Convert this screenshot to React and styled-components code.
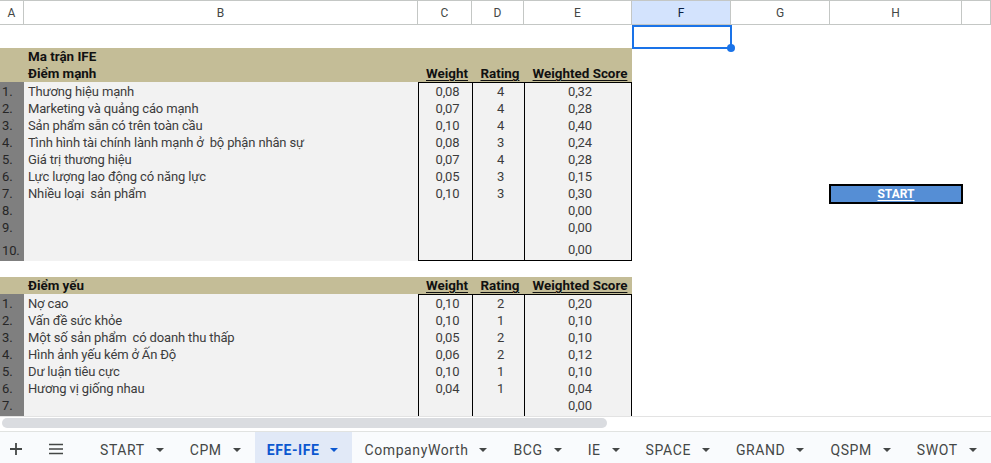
import React from "react";
import styled, { createGlobalStyle } from "styled-components";

const GlobalStyle = createGlobalStyle`
  html, body { margin: 0; padding: 0; background: #fff; overflow: hidden; }
  * { box-sizing: border-box; }
`;

const COLS = "24px 394px 54px 52px 108px 99px 99px 132px 1fr";

const Page = styled.div`
  width: 991px;
  height: 463px;
  display: flex;
  flex-direction: column;
  font-family: Roboto, "Liberation Sans", sans-serif;
  overflow: hidden;
`;

const Sheet = styled.div`
  height: 416px;
  flex: none;
  overflow: hidden;
  display: flex;
  flex-direction: column;
`;

const HeaderRow = styled.div`
  display: grid;
  grid-template-columns: ${COLS};
  height: 25px;
  flex: none;
  border-top: 1px solid #c4c7c5;
  border-bottom: 1px solid #c4c7c5;
`;

const ColHead = styled.div`
  display: flex;
  align-items: center;
  justify-content: center;
  font-size: 12px;
  color: ${(p) => (p.$active ? "#0b1f44" : "#444746")};
  background: ${(p) => (p.$active ? "#d3e3fd" : "#fff")};
  border-right: 1px solid #c4c7c5;
`;

const Row = styled.div`
  display: grid;
  grid-template-columns: ${COLS};
  grid-template-rows: ${(p) => p.$h || 17}px;
  height: ${(p) => p.$h || 17}px;
  flex: none;
`;

const Cell = styled.div`
  position: relative;
  display: flex;
  align-items: flex-end;
  justify-content: ${(p) => (p.$center ? "center" : "flex-start")};
  padding: 0 ${(p) => (p.$center ? 0 : 3)}px ${(p) => p.$pb ?? 1}px ${(p) => (p.$pl ?? 4)}px;
  background: ${(p) => p.$bg || "transparent"};
  font-size: ${(p) => (p.$bold ? 13.4 : 13)}px;
  line-height: 15px;
  letter-spacing: ${(p) => (p.$bold ? 0 : -0.15)}px;
  color: ${(p) => p.$color || "#3c3c3c"};
  font-weight: ${(p) => (p.$bold ? 700 : 400)};
  text-decoration: ${(p) => (p.$underline ? "underline" : "none")};
  text-underline-offset: 2px;
  white-space: pre;
  overflow: visible;
  border-left: ${(p) => (p.$boxL ? "1px solid #000" : "none")};
  border-right: ${(p) => (p.$boxR ? "1px solid #000" : "none")};
  border-top: ${(p) => (p.$boxT ? "1px solid #000" : "none")};
  border-bottom: ${(p) => (p.$boxB ? "1px solid #000" : "none")};
`;

const Selection = styled.div`
  position: absolute;
  inset: 0 -1px -1px 0;
  border: 2px solid #1a73e8;
`;

const Handle = styled.div`
  position: absolute;
  right: -4px;
  bottom: -4px;
  width: 8px;
  height: 8px;
  border-radius: 50%;
  background: #1a73e8;
  z-index: 2;
`;

const StartButton = styled.div`
  flex: none;
  width: 134px;
  height: 20px;
  margin: 0 0 -3px -1px;
  border: 2px solid #000;
  background: #558ed5;
  color: #fff;
  font-family: Roboto, "Liberation Sans", sans-serif;
  font-weight: 700;
  font-size: 12px;
  letter-spacing: 0;
  text-decoration: underline;
  text-underline-offset: 2px;
  display: flex;
  align-items: center;
  justify-content: center;
`;

const Scrollbar = styled.div`
  height: 15px;
  flex: none;
  border-top: 1px solid #e3e3e3;
  padding: 1px 0 0 2px;
`;

const Thumb = styled.div`
  width: 605px;
  height: 10px;
  border-radius: 5px;
  background: #dadce0;
`;

const TabBar = styled.div`
  flex: 1;
  background: #f9fbfd;
  border-top: 1px solid #e1e3e1;
  display: flex;
  align-items: stretch;
  padding-left: 6px;
  overflow: hidden;
`;

const IconBtn = styled.div`
  width: ${(p) => p.$w}px;
  flex: none;
  display: flex;
  align-items: center;
  justify-content: center;
  padding-top: 3px;
  color: #444746;
`;

const Tab = styled.div`
  flex: none;
  white-space: nowrap;
  display: flex;
  align-items: center;
  gap: 11px;
  padding: 4px 14px 0 12px;
  font-size: 14px;
  letter-spacing: 0.6px;
  font-weight: ${(p) => (p.$active ? 700 : 400)};
  color: ${(p) => (p.$active ? "#0b57d0" : "#444746")};
  background: ${(p) => (p.$active ? "#e1e9f7" : "transparent")};
`;

const Caret = ({ color }) => (
  <svg width="8" height="4" viewBox="0 0 8 4">
    <path d="M0 0 L8 0 L4 4 Z" fill={color} />
  </svg>
);

const TAN = "#c4bd97";
const GREY = "#f2f2f2";
const DARK = "#7f7f7f";

const strong = [
  ["Thương hiệu mạnh", "0,08", "4", "0,32"],
  ["Marketing và quảng cáo mạnh", "0,07", "4", "0,28"],
  ["Sản phẩm sẵn có trên toàn cầu", "0,10", "4", "0,40"],
  ["Tình hình tài chính lành mạnh ở  bộ phận nhân sự", "0,08", "3", "0,24"],
  ["Giá trị thương hiệu", "0,07", "4", "0,28"],
  ["Lực lượng lao động có năng lực", "0,05", "3", "0,15"],
  ["Nhiều loại  sản phẩm", "0,10", "3", "0,30"],
  ["", "", "", "0,00"],
  ["", "", "", "0,00"],
  ["", "", "", "0,00"],
];

const weak = [
  ["Nợ cao", "0,10", "2", "0,20"],
  ["Vấn đề sức khỏe", "0,10", "1", "0,10"],
  ["Một số sản phẩm  có doanh thu thấp", "0,05", "2", "0,10"],
  ["Hình ảnh yếu kém ở Ấn Độ", "0,06", "2", "0,12"],
  ["Dư luận tiêu cực", "0,10", "1", "0,10"],
  ["Hương vị giống nhau", "0,04", "1", "0,04"],
  ["", "", "", "0,00"],
  ["", "", "", ""],
];

const Empty = ({ n }) => Array.from({ length: n }, (_, i) => <Cell key={i} />);

function TitleRow({ title, headers }) {
  return (
    <Row>
      <Cell $bg={TAN} />
      <Cell $bg={TAN} $bold $color="#111">{title}</Cell>
      {headers ? (
        <>
          <Cell $bg={TAN} $center $bold $underline $color="#111">Weight</Cell>
          <Cell $bg={TAN} $center $bold $underline $color="#111">Rating</Cell>
          <Cell $bg={TAN} $center $bold $underline $color="#111">Weighted Score</Cell>
        </>
      ) : (
        <>
          <Cell $bg={TAN} />
          <Cell $bg={TAN} />
          <Cell $bg={TAN} />
        </>
      )}
      <Empty n={4} />
    </Row>
  );
}

function DataRow({ idx, item, first, last, h, pb, extra, noLabel }) {
  const [name, w, r, s] = item;
  return (
    <Row $h={h}>
      <Cell $bg={DARK} $pl={2} $pb={pb} $color="#262626">{noLabel ? "" : `${idx}.`}</Cell>
      <Cell $bg={GREY} $pb={pb}>{name}</Cell>
      <Cell $bg={GREY} $pb={pb} $center $boxL $boxT={first} $boxB={last}>{w}</Cell>
      <Cell $bg={GREY} $pb={pb} $center $boxL $boxT={first} $boxB={last}>{r}</Cell>
      <Cell $bg={GREY} $pb={pb} $center $boxL $boxR $boxT={first} $boxB={last}>{s}</Cell>
      <Cell />
      <Cell />
      <Cell $pl={0} $pb={0}>{extra}</Cell>
      <Cell />
    </Row>
  );
}

const letters = ["A", "B", "C", "D", "E", "F", "G", "H", ""];
const tabs = [
  ["START"], ["CPM"], ["EFE-IFE", true], ["CompanyWorth"], ["BCG"], ["IE"],
  ["SPACE"], ["GRAND"], ["QSPM"], ["SWOT"],
];

export default function App() {
  return (
    <Page>
      <GlobalStyle />
      <Sheet>
        <HeaderRow>
          {letters.map((l, i) => (
            <ColHead key={i} $active={l === "F"}>{l}</ColHead>
          ))}
        </HeaderRow>
        <Row $h={23}>
          <Empty n={5} />
          <Cell>
            <Selection />
            <Handle />
          </Cell>
          <Empty n={3} />
        </Row>
        <TitleRow title="Ma trận IFE" />
        <TitleRow title="Điểm mạnh" headers />
        {strong.map((item, i) => {
          const last = i === strong.length - 1;
          return (
            <DataRow
              key={i}
              idx={i + 1}
              item={item}
              first={i === 0}
              last={last}
              h={last ? 26 : 17}
              pb={last ? 3 : 0}
              extra={i === 6 ? <StartButton>START</StartButton> : null}
            />
          );
        })}
        <Row $h={16}>
          <Empty n={9} />
        </Row>
        <TitleRow title="Điểm yếu" headers />
        {weak.map((item, i) => (
          <DataRow
            key={i}
            idx={i + 1}
            item={item}
            first={i === 0}
            pb={0}
            noLabel={i === 7}
          />
        ))}
      </Sheet>
      <Scrollbar>
        <Thumb />
      </Scrollbar>
      <TabBar>
        <IconBtn $w={20}>
          <svg width="14" height="14" viewBox="0 0 14 14">
            <path d="M7 1 V13 M1 7 H13" stroke="#444746" strokeWidth="1.8" />
          </svg>
        </IconBtn>
        <IconBtn $w={60}>
          <svg width="16" height="12" viewBox="0 0 16 12">
            <path d="M1 1.5 H15 M1 6 H15 M1 10.5 H15" stroke="#444746" strokeWidth="1.6" />
          </svg>
        </IconBtn>
        <IconBtn $w={2} />
        {tabs.map(([name, active]) => (
          <Tab key={name} $active={active}>
            {name}
            <Caret color={active ? "#0b57d0" : "#444746"} />
          </Tab>
        ))}
      </TabBar>
    </Page>
  );
}
